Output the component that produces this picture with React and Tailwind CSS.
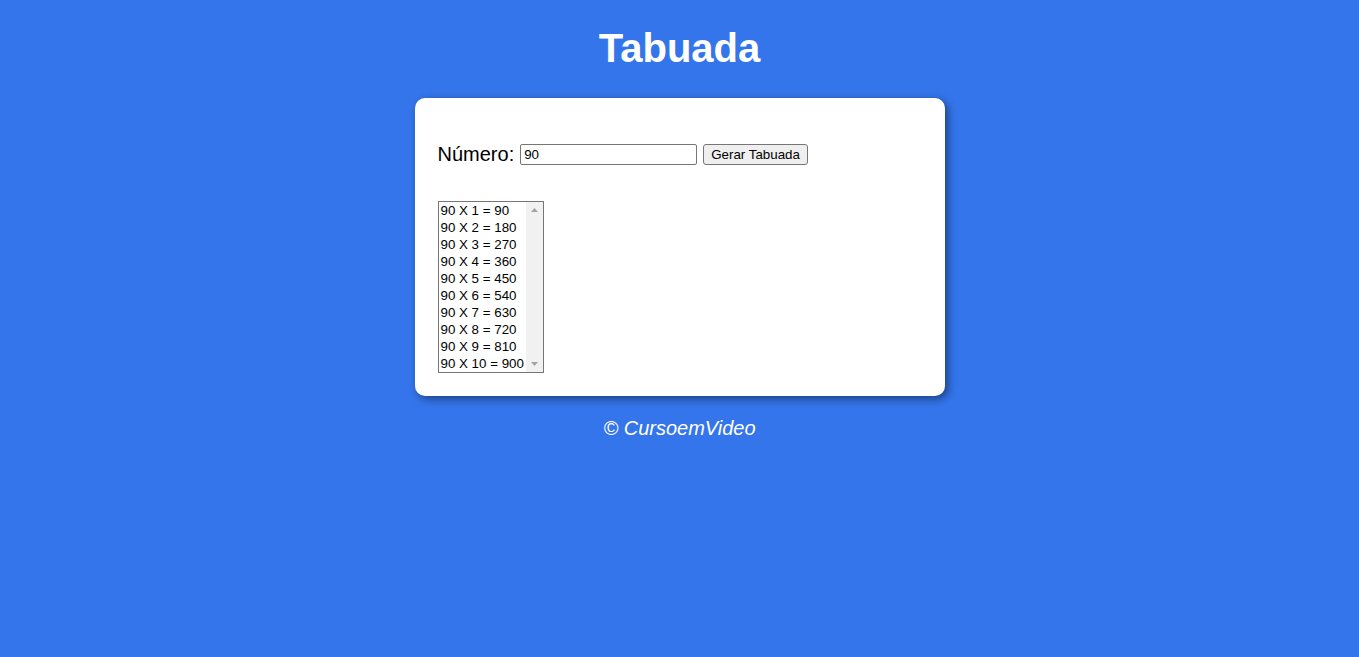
const linhas = Array.from({ length: 10 }, (_, i) => `90 X ${i + 1} = ${90 * (i + 1)}`)

export default function App() {
  return (
    <div className="min-h-screen bg-[#3475eb] font-['Liberation_Sans',Arial,sans-serif] flex flex-col items-center pt-[25px]">
      <h1 className="text-[40px] leading-[46px] font-bold text-white">Tabuada</h1>

      <section className="mt-[27px] w-[530px] h-[298px] bg-white rounded-[10px] shadow-[3px_3px_8px_rgba(0,0,0,0.45)] px-[23px] pt-[45px]">
        <div className="flex items-center text-[20px] leading-[23px] text-black">
          <span>Número:</span>
          <input
            type="text"
            defaultValue="90"
            className="ml-[6px] w-[177px] h-[21px] border border-[#767676] rounded-[2px] px-[3px] text-[13.33px] text-black outline-none"
          />
          <button className="ml-[6px] h-[21px] px-[7px] border border-[#767676] rounded-[3px] bg-[#efefef] text-[13.33px] leading-[17px] text-black">
            Gerar Tabuada
          </button>
        </div>

        <div className="mt-[35px] w-[106px] h-[172px] border border-[#767676] flex bg-white">
          <div className="flex-1 flex flex-col pl-[2px]">
            {linhas.map((l) => (
              <div key={l} className="h-[17px] leading-[17px] text-[13.33px] text-black whitespace-nowrap">
                {l}
              </div>
            ))}
          </div>
          <div className="w-[17px] bg-[#f1f1f1] flex flex-col justify-between items-center py-[6px]">
            <svg width="7" height="4" viewBox="0 0 7 4">
              <path d="M0 4 L3.5 0 L7 4 Z" fill="#a3a3a3" />
            </svg>
            <svg width="7" height="4" viewBox="0 0 7 4">
              <path d="M0 0 L3.5 4 L7 0 Z" fill="#a3a3a3" />
            </svg>
          </div>
        </div>
      </section>

      <footer className="mt-[21px] text-[20px] leading-[23px] italic text-white">© CursoemVideo</footer>
    </div>
  )
}
